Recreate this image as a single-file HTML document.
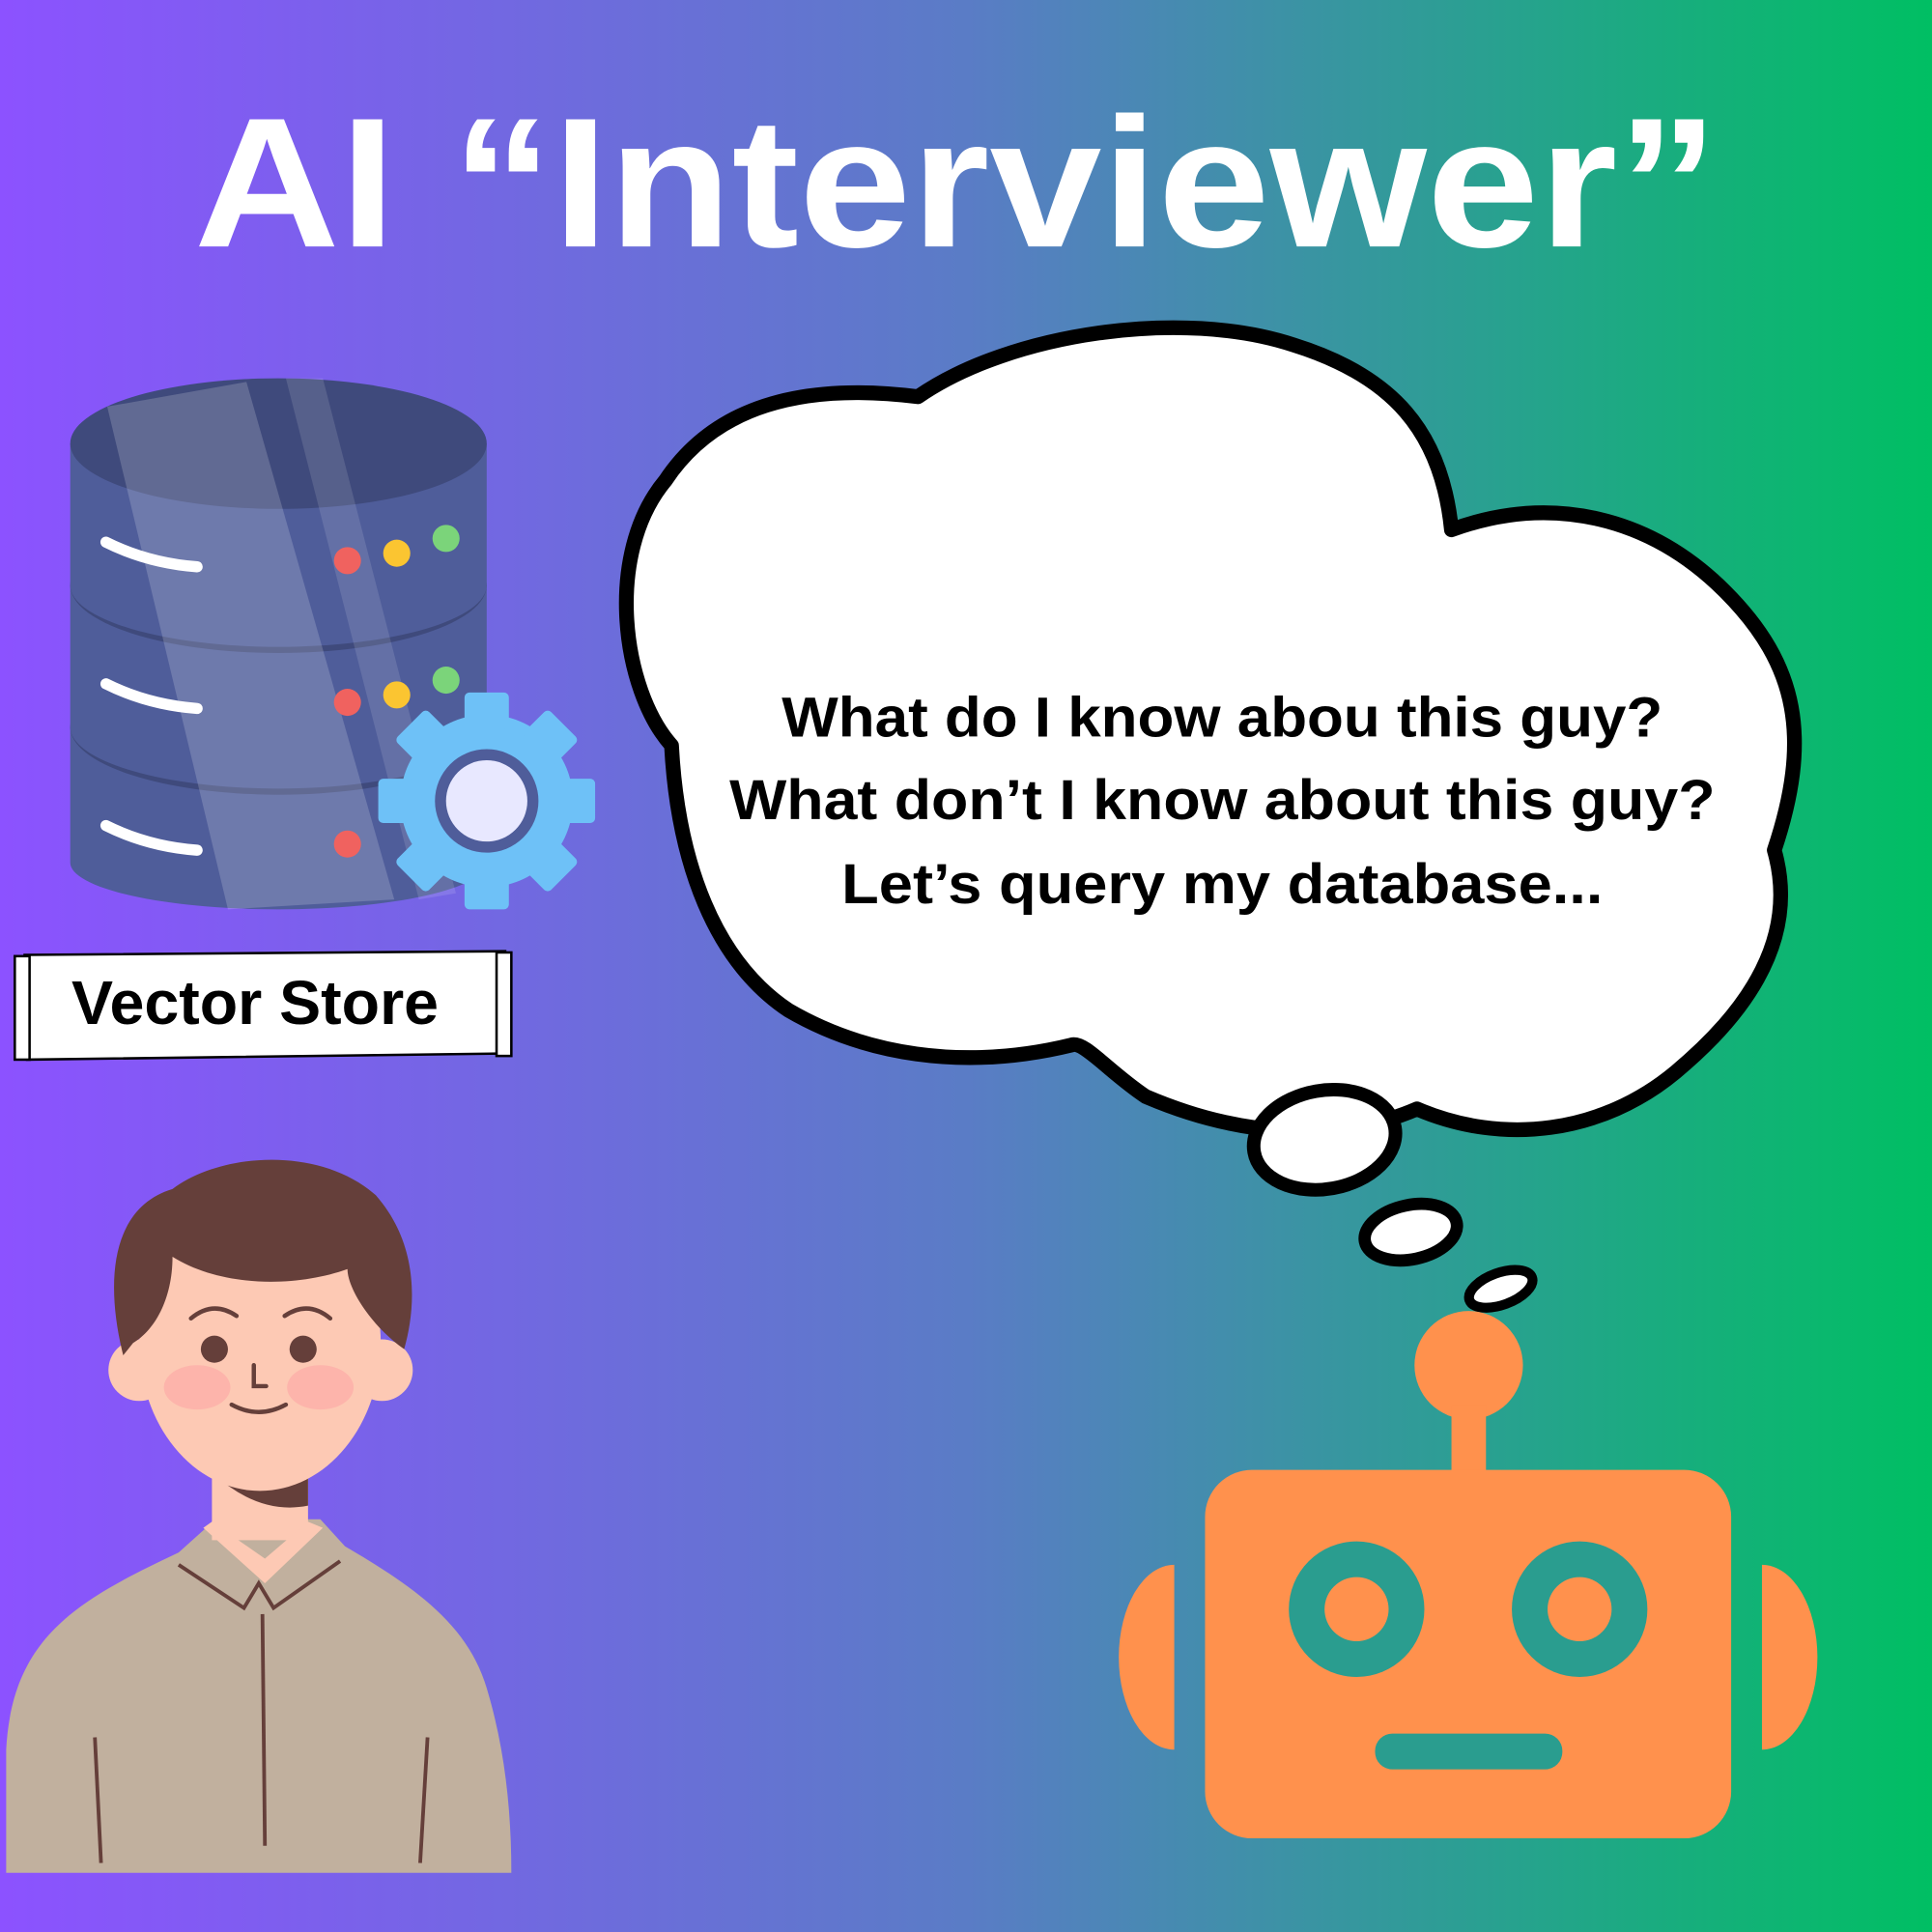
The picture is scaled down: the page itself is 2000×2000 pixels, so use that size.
<!DOCTYPE html>
<html><head><meta charset="utf-8"><style>
html,body{margin:0;padding:0;width:2000px;height:2000px;overflow:hidden}
svg{display:block}
</style></head><body>
<svg width="2000" height="2000" viewBox="0 0 1568 1568" xmlns="http://www.w3.org/2000/svg">
<defs>
<linearGradient id="bg" x1="0" y1="0" x2="1" y2="0">
<stop offset="0" stop-color="#8c52ff"/>
<stop offset="0.5" stop-color="#5a7cc6"/>
<stop offset="1" stop-color="#00bf63"/>
</linearGradient>
</defs>
<rect width="1568" height="1568" fill="url(#bg)"/>
<text x="776" y="200" text-anchor="middle" font-family="Liberation Sans, sans-serif" font-weight="bold" font-size="150" fill="#fff" textLength="1237" lengthAdjust="spacingAndGlyphs">AI “Interviewer”</text>

<!-- database -->
<g>
<path d="M57 590 L57 700 A169 38 0 0 0 395 700 L395 590 Z" fill="#4f5d9a"/>
<ellipse cx="226" cy="590" rx="169" ry="55" fill="#3f4a7c"/>
<path d="M57 475 L57 590 A169 50 0 0 0 395 590 L395 475 Z" fill="#4f5d9a"/>
<ellipse cx="226" cy="475" rx="169" ry="55" fill="#3f4a7c"/>
<path d="M57 360 L57 475 A169 50 0 0 0 395 475 L395 360 Z" fill="#4f5d9a"/>
<ellipse cx="226" cy="360" rx="169" ry="53" fill="#3f4a7c"/>
<path d="M87 330 L200 310 L320 730 L185 738 Z" fill="#fff" opacity="0.18"/>
<path d="M232 307 L262 307 L370 725 L340 730 Z" fill="#fff" opacity="0.12"/>
<g stroke="#fff" stroke-width="9" stroke-linecap="round" fill="none">
<path d="M86 440 Q120 457 160 460"/><path d="M86 555 Q120 572 160 575"/><path d="M86 670 Q120 687 160 690"/>
</g>
<circle cx="282" cy="455" r="11" fill="#f0625f"/><circle cx="322" cy="449" r="11" fill="#fbc531"/><circle cx="362" cy="437" r="11" fill="#7bd47a"/>
<circle cx="282" cy="570" r="11" fill="#f0625f"/><circle cx="322" cy="564" r="11" fill="#fbc531"/><circle cx="362" cy="552" r="11" fill="#7bd47a"/>
<circle cx="282" cy="685" r="11" fill="#f0625f"/>
</g>
<!-- gear -->
<g transform="translate(395,650)" fill="#6ec1f7">
<circle r="70"/>
<g id="t"><rect x="-18" y="-88" width="36" height="30" rx="4"/></g>
<use href="#t" transform="rotate(45)"/><use href="#t" transform="rotate(90)"/><use href="#t" transform="rotate(135)"/>
<use href="#t" transform="rotate(180)"/><use href="#t" transform="rotate(225)"/><use href="#t" transform="rotate(270)"/><use href="#t" transform="rotate(315)"/>
<circle r="42" fill="#4f5d9a"/><circle r="33" fill="#e8e8ff"/>
</g>

<!-- banner -->
<path d="M20 775 L410 772 L410 855 L22 860 Z" fill="#fff" stroke="#000" stroke-width="2"/>
<rect x="12" y="776" width="12" height="84" fill="#fff" stroke="#000" stroke-width="2"/>
<rect x="403" y="773" width="12" height="84" fill="#fff" stroke="#000" stroke-width="2"/>
<text x="207" y="831" text-anchor="middle" font-family="Liberation Sans, sans-serif" font-weight="bold" font-size="50" fill="#000" textLength="298" lengthAdjust="spacingAndGlyphs">Vector Store</text>

<!-- cloud -->
<path d="M545 605 C505 560 490 450 540 390 C580 330 650 310 745 322 C820 270 960 250 1050 280 C1130 305 1170 350 1178 430 C1260 400 1340 420 1400 480 C1460 540 1470 600 1440 690 C1460 760 1420 820 1360 870 C1300 920 1220 930 1150 900 C1080 930 1000 920 930 890 C900 870 880 845 870 848 C780 870 700 855 640 820 C580 780 550 700 545 605 Z" fill="#fff" stroke="#000" stroke-width="12" stroke-linejoin="round"/>
<ellipse cx="1075" cy="925" rx="58" ry="40" fill="#fff" stroke="#000" stroke-width="11" transform="rotate(-10 1075 925)"/>
<ellipse cx="1145" cy="1000" rx="38" ry="22" fill="#fff" stroke="#000" stroke-width="10" transform="rotate(-12 1145 1000)"/>
<ellipse cx="1218" cy="1046" rx="27" ry="13" fill="#fff" stroke="#000" stroke-width="8" transform="rotate(-20 1218 1046)"/>
<g font-family="Liberation Sans, sans-serif" font-weight="bold" font-size="46" fill="#000" text-anchor="middle">
<text x="992" y="598" textLength="715" lengthAdjust="spacingAndGlyphs">What do I know abou this guy?</text>
<text x="992" y="665" textLength="800" lengthAdjust="spacingAndGlyphs">What don’t I know about this guy?</text>
<text x="992" y="733" textLength="618" lengthAdjust="spacingAndGlyphs">Let’s query my database...</text>
</g>

<!-- robot -->
<g fill="#ff914d">
<circle cx="1192" cy="1108" r="44"/>
<rect x="1178" y="1140" width="28" height="60"/>
<rect x="978" y="1193" width="427" height="299" rx="38"/>
<path d="M953 1270 A45 75 0 0 0 953 1420 Z"/>
<path d="M1430 1270 A45 75 0 0 1 1430 1420 Z"/>
</g>
<g fill="#2a9d8f">
<circle cx="1101" cy="1306" r="55"/><circle cx="1282" cy="1306" r="55"/>
<rect x="1116" y="1407" width="152" height="29" rx="14"/>
</g>
<circle cx="1101" cy="1306" r="26" fill="#ff914d"/><circle cx="1282" cy="1306" r="26" fill="#ff914d"/>

<!-- person -->
<path d="M5 1520 L5 1420 C10 1330 60 1300 145 1260 L175 1233 L260 1233 L280 1255 C340 1290 380 1320 395 1370 C410 1420 415 1470 415 1520 Z" fill="#c1b09e"/>
<rect x="172" y="1180" width="78" height="70" fill="#fdc9b4"/>
<path d="M172 1195 Q210 1230 250 1222 L250 1190 Z" fill="#653f3a"/>
<path d="M172 1235 L215 1265 L250 1235 L262 1240 L215 1285 L165 1240 Z" fill="#fdc9b4"/>
<g stroke="#653f3a" stroke-width="3" fill="none">
<path d="M145 1270 L198 1305 L210 1285 L222 1305 L276 1267"/>
<path d="M213 1310 L215 1498"/>
<path d="M77 1410 L82 1512"/><path d="M347 1410 L341 1512"/>
</g>
<circle cx="113" cy="1112" r="25" fill="#fdc9b4"/><circle cx="310" cy="1112" r="25" fill="#fdc9b4"/>
<ellipse cx="211" cy="1090" rx="98" ry="120" fill="#fdc9b4"/>
<path d="M100 1100 C85 1040 90 980 140 965 C180 935 260 930 305 970 C340 1010 338 1060 328 1095 C300 1075 282 1045 282 1030 C240 1045 180 1045 140 1020 C140 1055 125 1080 108 1090 Z" fill="#653f3a"/>
<ellipse cx="160" cy="1126" rx="27" ry="18" fill="#fdb4ab"/><ellipse cx="260" cy="1126" rx="27" ry="18" fill="#fdb4ab"/>
<circle cx="174" cy="1095" r="11" fill="#653f3a"/><circle cx="246" cy="1095" r="11" fill="#653f3a"/>
<g stroke="#653f3a" stroke-width="3.5" fill="none" stroke-linecap="round">
<path d="M155 1070 Q173 1055 192 1068"/><path d="M231 1068 Q250 1055 268 1070"/>
<path d="M206 1108 L206 1125 L216 1125"/><path d="M188 1140 Q210 1152 232 1140"/>
</g>
</svg>
</body></html>
